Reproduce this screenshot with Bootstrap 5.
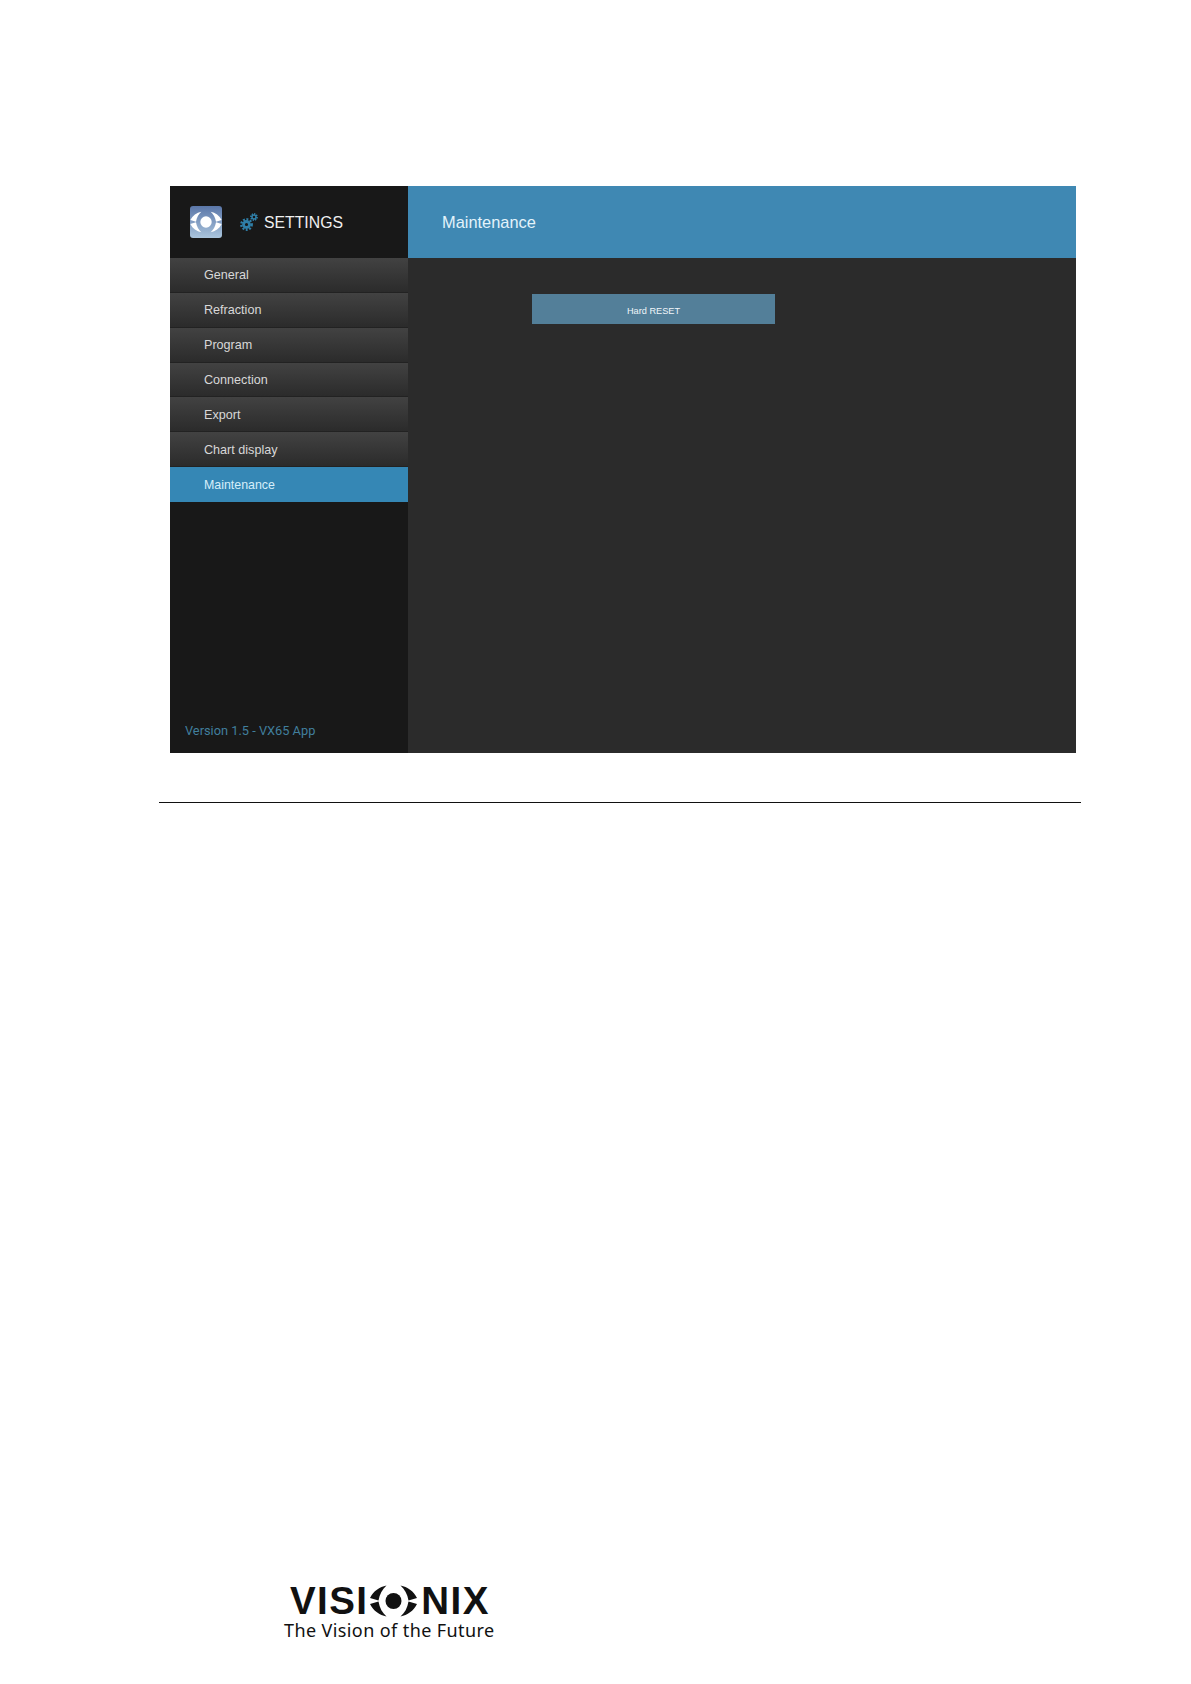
<!DOCTYPE html>
<html lang="en">
<head>
<meta charset="utf-8">
<title>Settings - Maintenance</title>
<link href="https://cdn.jsdelivr.net/npm/bootstrap@5.3.0/dist/css/bootstrap.min.css" rel="stylesheet">
<style>
html,body{height:1684px;overflow:hidden;background:#fff}
body{font-family:"Liberation Sans",Arial,sans-serif;padding-top:186px}
.app-panel{margin-left:170px;width:906px;height:567px;background:#2b2b2b}
.side-col{width:238px;background:#181818}
.side-head{height:72px;padding-left:20px;color:#efefef;font-size:15.8px}
.side-title{padding-top:2px}
.app-icon{width:32px;height:32px;margin-right:18px}
.gear-icon{width:18px;height:18px;margin-right:6px}
.menu-row{height:34.85px;padding-left:34px;padding-top:2px;font-size:12.6px;color:#d8d8d8;background:linear-gradient(#424242,#2b2b2b);border-bottom:1px solid #222}
.menu-row.is-on{background:#3587b5;color:#d5eefa;border-bottom:0;font-size:12.4px}
.ver-line{padding:0 0 13px 15px;font-family:Roboto,sans-serif;font-size:12.8px;color:#417f9d}
.top-band{height:72px;background:#3f88b3;padding-left:34px;padding-top:1px;color:#e3f3fb;font-size:16.4px}
.reset-btn{margin:36px 0 0 124px;width:243px;height:29.5px;background:#537f99;color:#f0f6fa;font-size:9.2px;border:0;border-radius:0;padding:5px 0 0;line-height:16px}
.rule-line{margin:49px 0 0 159px;width:922px;height:1px;background:#111}
.logo-wrap{margin:783px 0 0 284px;width:212px;color:#111}
.logo-top{padding-left:6px;height:30px;font-family:"Liberation Sans",sans-serif;font-weight:700;font-size:38.5px;line-height:30px}
.logo-word{letter-spacing:1.4px}
.logo-eye{width:49px;height:32px;margin:0 3px 0 1px;flex:none}
.logo-tag{font-family:"Noto Sans",sans-serif;font-size:18px;letter-spacing:.4px;line-height:24px;margin-top:2px;white-space:nowrap}
</style>
</head>
<body>
<main class="app-panel d-flex">
  <aside class="side-col d-flex flex-column">
    <div class="side-head d-flex align-items-center">
      <svg class="app-icon" viewBox="0 0 32 32" aria-hidden="true">
        <defs><linearGradient id="ig" x1="0" y1="0" x2="0" y2="1"><stop offset="0" stop-color="#5a76a8"/><stop offset="1" stop-color="#aac5dd"/></linearGradient></defs>
        <rect width="32" height="32" rx="3" fill="url(#ig)"/>
        <g transform="translate(0 5.3) scale(.667)" fill="#fff">
          <path d="M.5 13C4 6 10 2 17 .5 13 4 10 9 9 15.5Z"/>
          <path d="M.5 13C4 6 10 2 17 .5 13 4 10 9 9 15.5Z" transform="matrix(-1 0 0 1 48 0)"/>
          <path d="M.5 13C4 6 10 2 17 .5 13 4 10 9 9 15.5Z" transform="matrix(1 0 0 -1 0 32)"/>
          <path d="M.5 13C4 6 10 2 17 .5 13 4 10 9 9 15.5Z" transform="matrix(-1 0 0 -1 48 32)"/>
          <circle cx="24" cy="16" r="8.5"/>
        </g>
      </svg>
      <svg class="gear-icon" viewBox="0 0 18 18" aria-hidden="true">
        <circle cx="6.5" cy="11.5" r="5.2" fill="none" stroke="#2f7fa8" stroke-width="2.4" stroke-dasharray="1.9 1.5"/>
        <circle cx="6.5" cy="11.5" r="3" fill="none" stroke="#2f7fa8" stroke-width="2.8"/>
        <circle cx="14" cy="4" r="3" fill="none" stroke="#2f7fa8" stroke-width="1.8" stroke-dasharray="1.3 1"/>
        <circle cx="14" cy="4" r="2" fill="none" stroke="#2f7fa8" stroke-width="1.5"/>
      </svg>
      <span class="side-title">SETTINGS</span>
    </div>
    <nav class="d-flex flex-column">
      <div class="menu-row d-flex align-items-center">General</div>
      <div class="menu-row d-flex align-items-center">Refraction</div>
      <div class="menu-row d-flex align-items-center">Program</div>
      <div class="menu-row d-flex align-items-center">Connection</div>
      <div class="menu-row d-flex align-items-center">Export</div>
      <div class="menu-row d-flex align-items-center">Chart display</div>
      <div class="menu-row is-on d-flex align-items-center">Maintenance</div>
    </nav>
    <div class="ver-line mt-auto">Version 1.5 - VX65 App</div>
  </aside>
  <section class="flex-grow-1 d-flex flex-column">
    <header class="top-band d-flex align-items-center">Maintenance</header>
    <div><button type="button" class="btn reset-btn">Hard RESET</button></div>
  </section>
</main>
<div class="rule-line"></div>
<footer class="logo-wrap">
  <div class="logo-top d-flex align-items-center">
    <span class="logo-word">VISI</span>
    <svg class="logo-eye" viewBox="0 0 48 32" aria-hidden="true">
      <g fill="#111">
        <path d="M.5 13C4 6 10 2 17 .5 13 4 10 9 9 15.5Z"/>
        <path d="M.5 13C4 6 10 2 17 .5 13 4 10 9 9 15.5Z" transform="matrix(-1 0 0 1 48 0)"/>
        <path d="M.5 13C4 6 10 2 17 .5 13 4 10 9 9 15.5Z" transform="matrix(1 0 0 -1 0 32)"/>
        <path d="M.5 13C4 6 10 2 17 .5 13 4 10 9 9 15.5Z" transform="matrix(-1 0 0 -1 48 32)"/>
        <circle cx="24" cy="16" r="8"/>
      </g>
    </svg>
    <span class="logo-word">NIX</span>
  </div>
  <div class="logo-tag">The Vision of the Future</div>
</footer>
<script src="https://cdn.jsdelivr.net/npm/bootstrap@5.3.0/dist/js/bootstrap.bundle.min.js"></script>
</body>
</html>
